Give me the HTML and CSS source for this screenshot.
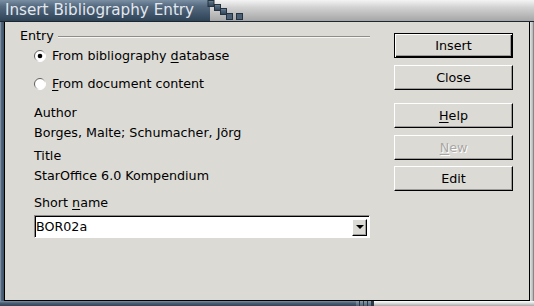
FILE: index.html
```html
<!DOCTYPE html>
<html>
<head>
    <title>Insert Bibliography Entry</title>
    <link rel="stylesheet" href="styles.css">
</head>
<body>
    <div class="window">
        <div class="titlebar">
            <div class="title-blue">Insert Bibliography Entry</div>
            <svg class="steps" width="50" height="21" viewBox="0 0 50 21">
                <defs>
                    <linearGradient id="tb" x1="0" y1="0" x2="0" y2="1">
                        <stop offset="0" stop-color="#7b8fa3"/>
                        <stop offset="0.3" stop-color="#55697f"/>
                        <stop offset="1" stop-color="#2f4357"/>
                    </linearGradient>
                </defs>
                <rect x="0" y="0" width="5" height="21" fill="url(#tb)"/>
                <rect x="3" y="0.5" width="6" height="6" fill="url(#tb)" stroke="#24323f"/>
                <rect x="9.5" y="4.5" width="6" height="6" fill="url(#tb)" stroke="#24323f"/>
                <rect x="15.5" y="8.5" width="6" height="6" fill="url(#tb)" stroke="#24323f"/>
                <rect x="21.5" y="13.5" width="6" height="6" fill="#4b6075" stroke="#24323f"/>
                <rect x="31.5" y="13.5" width="6" height="6" fill="#4b6075" stroke="#24323f"/>
            </svg>
        </div>

        <div class="middle">
            <div class="side-left"></div>
            <div class="client">
                <div class="left-col">
                    <div class="group-head">
                        <span>Entry</span>
                        <div class="rule"></div>
                    </div>

                    <div class="radio first">
                        <svg width="12" height="12" viewBox="0 0 12 12">
                            <defs>
                                <linearGradient id="rb" x1="0" y1="0" x2="1" y2="1">
                                    <stop offset="0.3" stop-color="#5e5d5b"/>
                                    <stop offset="0.7" stop-color="#ffffff"/>
                                </linearGradient>
                            </defs>
                            <circle cx="6" cy="6" r="5.5" fill="#fff" stroke="url(#rb)"/>
                            <circle cx="6" cy="6" r="2.3" fill="#000"/>
                        </svg>
                        <span>From bibliography <u>d</u>atabase</span>
                    </div>
                    <div class="radio second">
                        <svg width="12" height="12" viewBox="0 0 12 12">
                            <circle cx="6" cy="6" r="5.5" fill="#fff" stroke="url(#rb)"/>
                        </svg>
                        <span><u>F</u>rom document content</span>
                    </div>

                    <div class="field label-author">Author</div>
                    <div class="field value-author">Borges, Malte; Schumacher, Jörg</div>
                    <div class="field label-title">Title</div>
                    <div class="field value-title">StarOffice 6.0 Kompendium</div>
                    <div class="field label-short">Short <u>n</u>ame</div>

                    <div class="combo">
                        <span>BOR02a</span>
                        <div class="drop"><div class="arrow"></div></div>
                    </div>
                </div>

                <div class="buttons">
                    <button class="btn default">Insert</button>
                    <button class="btn close">Close</button>
                    <button class="btn help"><span><u>H</u>elp</span></button>
                    <button class="btn new disabled"><span><u>N</u>ew</span></button>
                    <button class="btn edit">Edit</button>
                </div>
            </div>
            <div class="side-right"></div>
        </div>

        <div class="bottombar">
            <div class="bb-blue"></div>
            <div class="bb-blocks">
                <i></i><i></i><i></i><i></i>
            </div>
            <div class="bb-gray"></div>
        </div>
    </div>
</body>
</html>
```

FILE: styles.css
```css
body {
    margin: 0;
    font-family: "DejaVu Sans", sans-serif;
    font-size: 12.7px;
    color: #000;
    background-color: #dcdad5;
}

.window {
    width: 534px;
    height: 306px;
    display: flex;
    flex-direction: column;
}

/* title bar */

.titlebar {
    position: relative;
    height: 21px;
    border-bottom: 1px solid #1c2732;
    background: linear-gradient(#f4f4f4, #d2d2d2 35%, #a6a6a6);
    display: flex;
}

.title-blue {
    width: 200px;
    padding-left: 5px;
    background: linear-gradient(#7b8fa3, #55697f 30%, #2f4357);
    color: #e2e8ee;
    font-size: 15.2px;
    line-height: 21px;
    white-space: nowrap;
}

.steps {
    position: absolute;
    left: 205px;
    top: 0;
}

/* frame */

.middle {
    flex: 1;
    display: flex;
}

.side-left {
    width: 4px;
    background: linear-gradient(90deg, #a3b2c0, #54697e 1px, #3e5368);
}

.side-right {
    width: 4px;
    background: linear-gradient(90deg, #e4e4e4, #b4b4b4 75%, #5a5a5a);
}

.client {
    flex: 1;
    border-left: 1px solid #000;
    border-right: 1px solid #000;
    border-bottom: 1px solid #000;
    padding: 7px 16px 0 15px;
    display: flex;
    gap: 24px;
}

.bottombar {
    height: 5px;
    display: flex;
}

.bb-blue {
    width: 356px;
    background: linear-gradient(#7b8fa3, #4b6075 40%, #2f4357);
}

.bb-blocks {
    width: 18px;
    display: flex;
    gap: 1px;
    background: #2b3845;
}

.bb-blocks i {
    width: 3px;
    background: linear-gradient(#8d9fb0, #4b6075);
}

.bb-gray {
    flex: 1;
    background: linear-gradient(#ffffff, #e0e0e0 40%, #a8a8a8);
}

/* left column */

.left-col {
    width: 350px;
    display: flex;
    flex-direction: column;
}

.group-head {
    display: flex;
    align-items: center;
    gap: 4px;
    height: 14px;
    line-height: 14px;
}

.rule {
    flex: 1;
    border-top: 1px solid #8e8d8a;
    border-bottom: 1px solid #f6f6f4;
    margin-top: 1px;
}

.radio {
    display: flex;
    align-items: center;
    gap: 6px;
    margin-left: 14px;
    height: 14px;
    line-height: 14px;
}

.radio.first { margin-top: 6px; }
.radio.second { margin-top: 14px; }

.field {
    margin-left: 14px;
    height: 14px;
    line-height: 14px;
}

.label-author { margin-top: 15px; }
.value-author { margin-top: 6px; }
.label-title { margin-top: 9px; }
.value-title { margin-top: 6px; }
.label-short { margin-top: 13px; }

u {
    text-decoration: underline;
    text-underline-offset: 2px;
}

.combo {
    margin-top: 5px;
    margin-left: 14px;
    height: 23px;
    box-sizing: border-box;
    border: 1px solid;
    border-color: #8c8a87 #ffffff #ffffff #8c8a87;
    box-shadow: inset 1px 1px 0 #000;
    background-color: #fff;
    display: flex;
    align-items: center;
    padding-left: 1px;
}

.drop {
    margin-left: auto;
    margin-right: 2px;
    margin-top: 1px;
    width: 15px;
    height: 17px;
    box-sizing: border-box;
    border: 1px solid;
    border-color: #fff #000 #000 #fff;
    box-shadow: inset -1px -1px 0 #9d9c9a;
    background-color: #dcdad5;
    display: flex;
    align-items: center;
    justify-content: center;
}

.arrow {
    width: 0;
    height: 0;
    border-left: 4px solid transparent;
    border-right: 4px solid transparent;
    border-top: 4px solid #000;
}

/* buttons */

.buttons {
    width: 119px;
    padding-top: 4px;
    display: flex;
    flex-direction: column;
}

.btn {
    height: 25px;
    padding: 0;
    box-sizing: border-box;
    border: 1px solid;
    border-color: #fff #000 #000 #fff;
    box-shadow: inset -1px -1px 0 #9d9c9a;
    background-color: #dcdad5;
    font-family: inherit;
    font-size: 12.7px;
    color: #000;
    display: flex;
    align-items: center;
    justify-content: center;
}

.btn.default {
    border-color: #000;
    box-shadow: inset 1px 1px 0 #fff, inset -1px -1px 0 #000, inset -2px -2px 0 #9d9c9a;
}

.btn.close { margin-top: 7px; }
.btn.help { margin-top: 13px; }
.btn.new { margin-top: 7px; }
.btn.edit { margin-top: 6px; }

.btn.disabled {
    color: #a9a8a5;
    text-shadow: 1px 1px 0 #fff;
}
```
